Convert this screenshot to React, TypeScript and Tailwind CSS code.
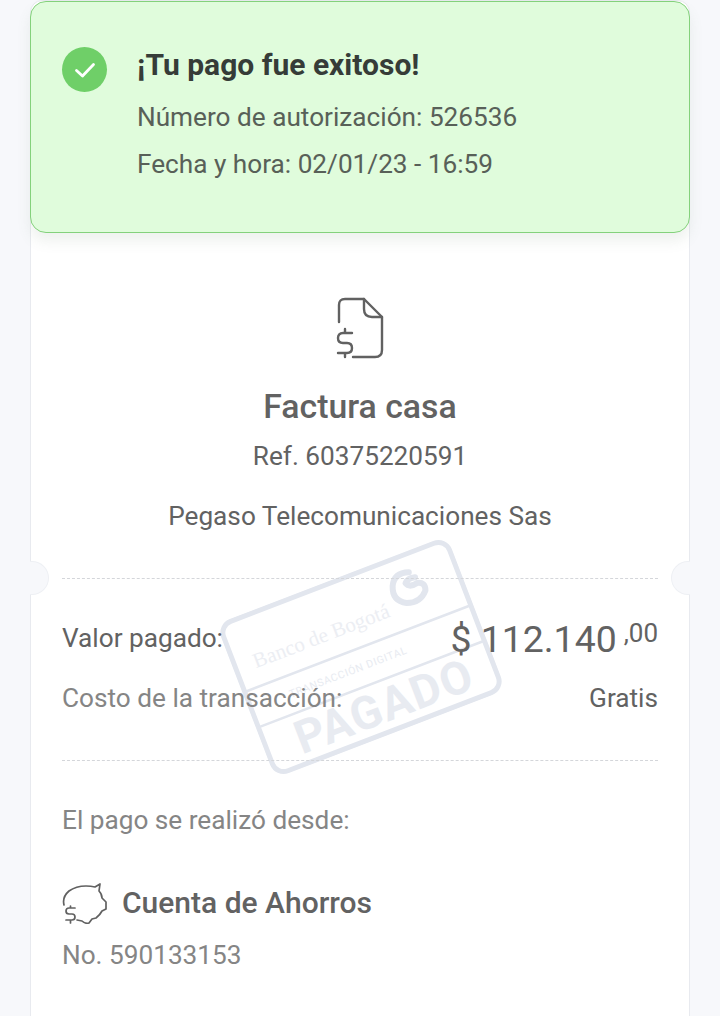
const font = { fontFamily: "Roboto, sans-serif" };

function FileIcon() {
  return (
    <svg width="48" height="62" viewBox="0 0 48 62" fill="none" stroke="#616161" strokeWidth="2.4" strokeLinecap="round" strokeLinejoin="round">
      <path d="M3 25 V8 Q3 2 9 2 H28 L46 20 V53 Q46 60 39 60 H17" />
      <path d="M28 2 V12 Q28 20 36 20 H46" />
      <path d="M16 36 H7 Q2 36 2 41 Q2 46 7 46 H11 Q16 46 16 51 Q16 56 11 56 H2 M9 32 V36 M9 56 V60" />
    </svg>
  );
}

function PiggyIcon() {
  return (
    <svg width="46" height="42" viewBox="0 0 46 42" fill="none" stroke="#616161" strokeWidth="1.7" strokeLinecap="round" strokeLinejoin="round">
      <path d="M2 23 Q0 15 7 9 Q14 4 24 4 Q29 4 33 5 L38 2 L37 9 Q40 12 40 16 L44 20 V27 L40 29 Q38 33 34 36 L30 37 L27 41 Q23 42 20 39 L15 38" />
      <path d="M13 26 H7 Q4 26 4 29 Q4 32 7 32 H10 Q13 32 13 35 Q13 38 10 38 H4 M8.500 24 V26 M8.500 38 V41" />
    </svg>
  );
}

function Stamp() {
  return (
    <svg width="248" height="166" viewBox="0 0 248 166" fill="none" className="absolute left-[237px] top-[574px] rotate-[-21deg]">
      <rect x="3" y="3" width="242" height="160" rx="12" stroke="#e2e6ee" strokeWidth="5" />
      <path d="M3 74 H245 M3 112 H245" stroke="#e2e6ee" strokeWidth="2.500" />
      <text x="22" y="56" fontFamily="'Liberation Serif', serif" fontSize="21" fill="#eceef3">Banco de Bogotá</text>
      <path d="M199 21 Q185 16 179 28 Q173 42 186 49 Q199 54 208 44 Q211 36 203 34 Q194 36 192 30 Q196 26 203 28" stroke="#e2e6ee" strokeWidth="6" strokeLinecap="round" strokeLinejoin="round" />
      <text x="44" y="96" fontFamily="Roboto, sans-serif" fontSize="10.500" letterSpacing="0.7" fill="#e8ebf1">TRANSACCIÓN DIGITAL</text>
      <text x="34" y="153" fontFamily="Roboto, sans-serif" fontSize="46" fontWeight="700" letterSpacing="1.2" fill="#e8ebf1">PAGADO</text>
    </svg>
  );
}

function Notch({ side }: { side: "left" | "right" }) {
  return (
    <div
      className={
        side === "left"
          ? "absolute left-[30px] top-[561px] h-[34px] w-[19px] rounded-r-full border border-l-0 border-[#eef0f4] bg-[#f7f8fb]"
          : "absolute right-[30px] top-[561px] h-[34px] w-[19px] rounded-l-full border border-r-0 border-[#eef0f4] bg-[#f7f8fb]"
      }
    />
  );
}

export default function App() {
  return (
    <div style={font} className="relative h-[1016px] w-[720px] overflow-hidden bg-[#f7f8fb] px-[30px]">
      <div className="h-[1030px] rounded-xl border border-[#e8eaef] bg-white">
        <Notch side="left" />
        <Notch side="right" />
        <Stamp />
        <div className="relative -mx-px flex h-[232px] gap-[30px] rounded-2xl border border-[#84d17c] bg-[#e0fcdc] pl-[31px] pt-[45px] shadow-[0_8px_14px_rgba(90,120,90,0.10)]">
          <div className="flex h-[45px] w-[45px] shrink-0 items-center justify-center rounded-full bg-[#6fcf68]">
            <svg width="24" height="24" viewBox="0 0 24 24" fill="none" stroke="#ffffff" strokeWidth="2.8" strokeLinecap="round" strokeLinejoin="round">
              <path d="M3.500 12.500 L9.500 18 L20.500 6.500" />
            </svg>
          </div>
          <div className="-mt-[1px]">
            <h1 className="text-[30px] font-bold leading-[38px] text-[#363c38]">¡Tu pago fue exitoso!</h1>
            <p className="mt-[17px] text-[26.2px] leading-[32px] text-[#586058]">Número de autorización: 526536</p>
            <p className="mt-[15px] text-[26.2px] leading-[32px] text-[#586058]">Fecha y hora: 02/01/23 - 16:59</p>
          </div>
        </div>

        <div className="relative px-[31px]">
          <div className="flex flex-col items-center text-center">
            <div className="mt-[64px] h-[62px]"><FileIcon /></div>
            <h2 className="mt-[28px] text-[33.8px] font-medium leading-[40px] text-[#626262]">Factura casa</h2>
            <p className="mt-[13px] text-[26.2px] leading-[32px] text-[#626262]">Ref. 60375220591</p>
            <p className="mt-[28px] text-[26.2px] leading-[32px] text-[#626262]">Pegaso Telecomunicaciones Sas</p>
          </div>
          <div className="mt-[46px] border-t border-dashed border-[#d4d6da]" />
          <div className="mt-[39px] flex h-[42px] items-center justify-between">
            <span className="text-[26.2px] text-[#626262]">Valor pagado:</span>
            <span className="flex items-start text-[#626262]">
              <span className="text-[37.4px] leading-[42px]">$ 112.140</span>
              <span className="ml-[7px] text-[26px] leading-[30px]">,00</span>
            </span>
          </div>
          <div className="mt-[23px] flex h-[32px] items-center justify-between text-[26.2px]">
            <span className="text-[#858585]">Costo de la transacción:</span>
            <span className="text-[#626262]">Gratis</span>
          </div>
          <div className="mt-[45px] border-t border-dashed border-[#d4d6da]" />
          <p className="mt-[43px] text-[26.2px] leading-[32px] text-[#858585]">El pago se realizó desde:</p>
          <div className="mt-[46px] flex h-[42px] items-center gap-[14px]">
            <PiggyIcon />
            <span className="text-[30px] font-medium leading-[40px] text-[#626262]">Cuenta de Ahorros</span>
          </div>
          <p className="mt-[15px] text-[26.2px] leading-[32px] text-[#858585]">No. 590133153</p>
        </div>
      </div>
    </div>
  );
}
